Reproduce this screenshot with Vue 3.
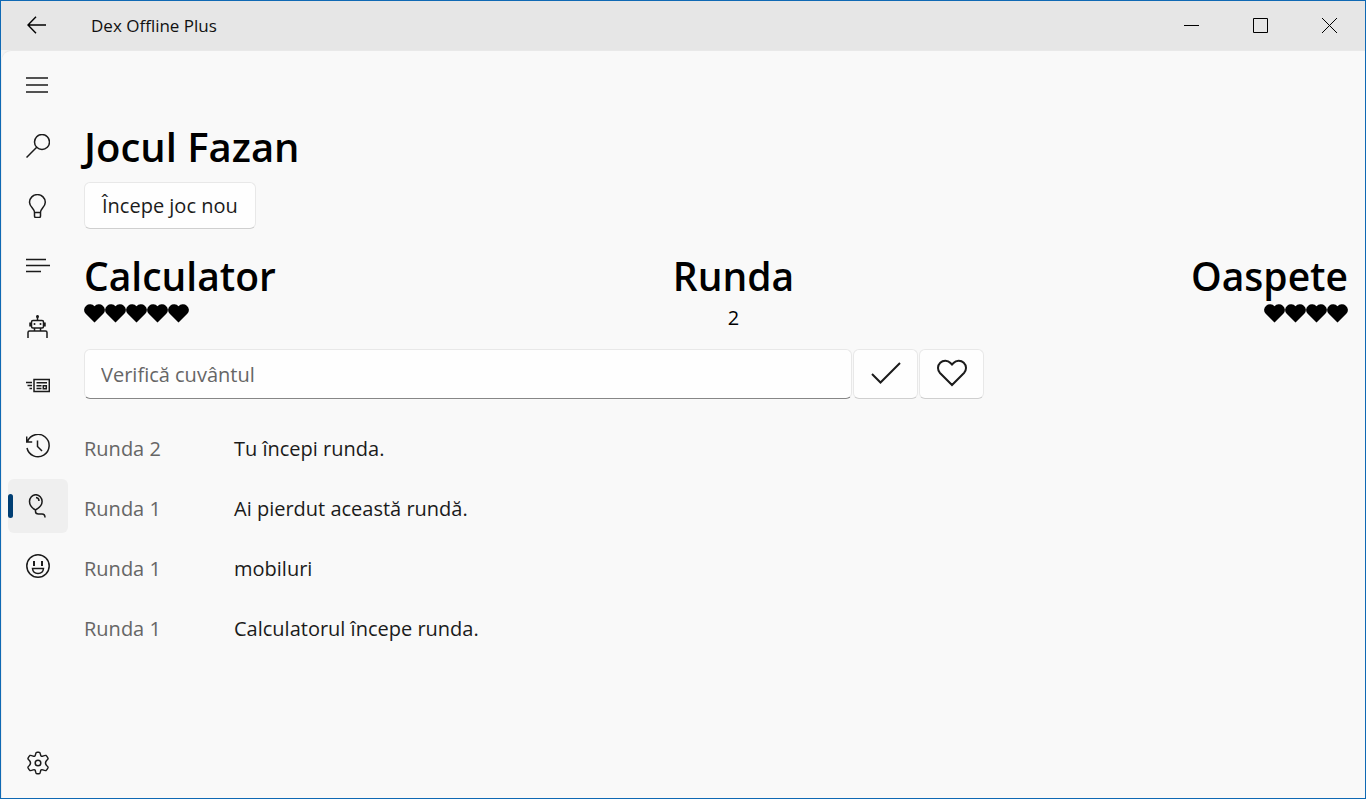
<script setup>
import { ref } from 'vue'

const word = ref('')
const selected = ref('fazan')

const items = [
  { id: 'search', label: 'Caută', paths: ['M11.200 12.800.500 23.500'], circles: [[16, 8, 7.500]] },
  { id: 'idea', label: 'Cuvântul zilei', paths: ['M8.500 18.500C8.500 14.500 3.500 13 3.500 8.300a7.900 7.700 0 0 1 15.800 0C19.300 13 14.500 14.500 14.500 18.500zM8.500 18.500V22q0 1.500 1.300 1.500h3.400q1.300 0 1.300-1.500v-3.500'] },
  { id: 'text', label: 'Definiții', paths: ['M0 5.500h20M0 11.500h24M0 17.500h15'] },
  { id: 'robot', label: 'Robot', paths: ['M11.500 6.500V1.500M7 6.500h9q1.500 0 1.500 1.500v4.500q0 1.500-1.500 1.500H7q-1.500 0-1.500-1.500V8q0-1.500 1.500-1.500zM4 8.500v4M19 8.500v4M8.500 14v2.500M14.500 14v2.500M2 24v-5.500q0-1.500 1.500-1.500h16q1.500 0 1.500 1.500V24'], dots: [[11.5, 2.5, 1.5], [8.5, 10, 1], [14.5, 10, 1]] },
  { id: 'news', label: 'Noutăți', paths: ['M8 5.500h15.300v12H8zM0 8.500h6M1.500 11.500H6M3.500 14.500H6M10.500 8.700h10.500M10.500 11.700h5M10.500 14.500h5M17.300 11.700h3v3h-3z'] },
  { id: 'history', label: 'Istoric', paths: ['M1.500 7.500A11.200 11.200 0 1 1 1 14M0.700 2.500v5.500h5.500M11.500 6.500v6l4.500 4.500'] },
  { id: 'fazan', label: 'Jocul Fazan', paths: ['M9.500 16C6 14 3.500 11 3.500 7.500a6.300 6.800 0 0 1 12.600 0C16.100 11 13 14 9.500 16zM10 3.500q3 .3 3 3.500M9.500 16v1.500q0 2.500 3 2.500h3.500q3 0 3 3.500'] },
  { id: 'jokes', label: 'Glume', paths: ['M6.500 14.500h11q-.5 5-5.500 5t-5.500-5z'], eyes: 'M8 7v5M16 7v5', circles: [[12, 12, 11.2]] }
]

const rounds = [
  { round: 'Runda 2', text: 'Tu începi runda.' },
  { round: 'Runda 1', text: 'Ai pierdut această rundă.' },
  { round: 'Runda 1', text: 'mobiluri' },
  { round: 'Runda 1', text: 'Calculatorul începe runda.' }
]
</script>

<template>
  <div class="window">
    <header class="titlebar">
      <button class="back" type="button" aria-label="Înapoi">
        <svg width="20" height="18" viewBox="0 0 20 18"><path d="M9 .8 1 9l8 8.200M1 9h18" /></svg>
      </button>
      <span class="app-name">Dex Offline Plus</span>
      <button class="caption" type="button" aria-label="Minimizează">
        <svg width="15" height="15" viewBox="0 0 15 15"><path d="M0 7.500h15" /></svg>
      </button>
      <button class="caption" type="button" aria-label="Maximizează">
        <svg width="15" height="15" viewBox="0 0 15 15"><path d="M.5.5h14v14H.5z" /></svg>
      </button>
      <button class="caption" type="button" aria-label="Închide">
        <svg width="15" height="15" viewBox="0 0 15 15"><path d="m0 0 15 15M15 0 0 15" /></svg>
      </button>
    </header>

    <div class="body">
      <nav class="rail">
        <button class="rail-item menu" type="button" aria-label="Meniu">
          <svg width="24" height="24" viewBox="0 0 24 24"><path d="M0 5h22M0 12h22M0 19h22" /></svg>
        </button>
        <button
          v-for="item in items"
          :key="item.id"
          class="rail-item"
          :class="{ active: item.id === selected }"
          type="button"
          :aria-label="item.label"
          @click="selected = item.id"
        >
          <svg width="24" height="24" viewBox="0 0 24 24">
            <path v-for="d in item.paths" :key="d" :d="d" />
            <path v-if="item.eyes" class="eyes" :d="item.eyes" />
            <circle v-for="c in item.circles" :key="c.join()" :cx="c[0]" :cy="c[1]" :r="c[2]" />
            <circle v-for="c in item.dots" :key="c.join()" class="dot" :cx="c[0]" :cy="c[1]" :r="c[2]" />
          </svg>
        </button>
        <button class="rail-item settings" type="button" aria-label="Setări">
          <svg width="24" height="24" viewBox="0 0 24 24">
            <path stroke-linejoin="round" d="M9.500 3.500q.3-2.200 1.500-2.200h2q1.200 0 1.500 2.200.2 2.300 2.400 1.600 2.300-1 3.200-.6 1 .8 1.900 2.800.3.800-1.400 2.200-2.200 2.500 0 5 1.700 1.400 1.400 2.200-.9 2-1.900 2.800-.9.400-3.200-.6-2.200-.7-2.400 1.600-.3 2.200-1.500 2.200h-2q-1.200 0-1.500-2.200-.2-2.300-2.400-1.600-2.300 1-3.200.6-1-.8-1.900-2.800-.3-.8 1.400-2.200 2.200-2.500 0-5Q1.700 8.100 2 7.300q.9-2 1.900-2.800.9-.4 3.200.6 2.200.7 2.400-1.600z" />
            <circle cx="12" cy="12" r="2.800" />
          </svg>
        </button>
      </nav>

      <main class="content">
        <h1>Jocul Fazan</h1>
        <button class="box new-game" type="button">Începe joc nou</button>

        <section class="score">
          <div class="player">
            <h2>Calculator</h2>
            <div class="lives">
              <svg v-for="n in 5" :key="n" width="21" height="19" viewBox="0 0 21 19"><path d="M10.500 18.500 1.500 9.500A5.600 5.300 0 0 1 10.500 2.300 5.600 5.300 0 0 1 19.500 9.500z" /></svg>
            </div>
          </div>
          <div class="player round">
            <h2>Runda</h2>
            <p>2</p>
          </div>
          <div class="player guest">
            <h2>Oaspete</h2>
            <div class="lives">
              <svg v-for="n in 4" :key="n" width="21" height="19" viewBox="0 0 21 19"><path d="M10.500 18.500 1.500 9.500A5.600 5.300 0 0 1 10.500 2.300 5.600 5.300 0 0 1 19.500 9.500z" /></svg>
            </div>
          </div>
        </section>

        <form class="entry" @submit.prevent>
          <input v-model="word" class="box" type="text" placeholder="Verifică cuvântul" aria-label="Verifică cuvântul" />
          <button class="box" type="submit" aria-label="Verifică">
            <svg width="30" height="30" viewBox="0 0 30 30"><path d="m1 15 8.500 8.500L29 4" /></svg>
          </button>
          <button class="box" type="button" aria-label="Folosește o viață">
            <svg width="30" height="30" viewBox="0 0 30 30"><path d="M15 26 3 14A7.200 7.200 0 0 1 13.500 4L15 5.500 16.500 4A7.200 7.200 0 0 1 27 14z" /></svg>
          </button>
        </form>

        <dl class="log">
          <div v-for="(entry, i) in rounds" :key="i" class="log-row">
            <dt>{{ entry.round }}</dt>
            <dd>{{ entry.text }}</dd>
          </div>
        </dl>
      </main>
    </div>
  </div>
</template>

<style>
body {
  margin: 0;
  background: #f9f9f9;
}
</style>

<style scoped>
* {
  box-sizing: border-box;
}

.window {
  display: flex;
  flex-direction: column;
  min-height: 100vh;
  border: 1px solid #0f69b4;
  background: #f3f3f3;
  color: #1b1b1b;
  font: 20px/28px "Segoe UI", "Open Sans", "Noto Sans", sans-serif;
}

button {
  display: flex;
  align-items: center;
  justify-content: center;
  padding: 0;
  border: 0;
  background: none;
  color: inherit;
  font: inherit;
}

svg {
  display: block;
  fill: none;
  stroke: #1b1b1b;
  stroke-width: 1.5;
}

.titlebar {
  display: flex;
  height: 49px;
  padding-right: 1px;
  background: #e6e6e6;
}

.titlebar svg {
  stroke: #000;
  stroke-width: 1;
}

.back {
  width: 72px;
  height: 48px;
}

.titlebar .back svg {
  stroke-width: 1.4;
}

.app-name {
  flex: 1;
  padding-left: 18px;
  color: #111;
  font-size: 17px;
  line-height: 50px;
}

.caption {
  width: 69px;
}

.body {
  display: flex;
  flex: 1;
  border-top: 1px solid #e9e9e9;
  border-left: 1px solid #ececec;
  border-radius: 10px 0 0 0;
  background: #f9f9f9;
}

.rail {
  display: flex;
  flex-direction: column;
  gap: 6px;
  width: 66px;
  padding: 7px 0 8px 6px;
}

.rail-item {
  position: relative;
  width: 60px;
  height: 54px;
  border-radius: 6px;
}

.menu {
  margin-bottom: 1px;
}

.menu svg {
  stroke-width: 1.4;
}

.dot {
  fill: #1b1b1b;
  stroke: none;
}

.eyes {
  stroke-width: 2;
}

.active {
  background: #efefef;
}

.active::before {
  position: absolute;
  left: 0;
  width: 5px;
  height: 24px;
  border-radius: 3px;
  background: #003e73;
  content: "";
}

.settings {
  margin-top: auto;
}

.content {
  flex: 1;
  padding: 68px 17px 0 16px;
}

h1,
h2 {
  margin: 0;
  color: #000;
  font-size: 40px;
  font-weight: 600;
  line-height: 56px;
}

h2 {
  font-size: 39px;
}

.box {
  border: 1px solid #e8e8e8;
  border-bottom-color: #cfcfcf;
  border-radius: 6px;
  background: #fefefe;
}

.new-game {
  height: 47px;
  margin-top: 7px;
  padding: 1px 17px 0;
}

.score {
  display: flex;
  justify-content: space-between;
  margin-top: 19px;
}

.round {
  text-align: center;
}

.round p {
  margin: 0;
  color: #000;
}

.guest {
  text-align: right;
}

.lives {
  display: flex;
}

.guest .lives {
  justify-content: flex-end;
}

.lives svg {
  fill: #000;
  stroke: none;
}

.entry {
  display: flex;
  gap: 1px;
  max-width: 900px;
  height: 50px;
  margin-top: 17px;
}

.entry input {
  flex: 1;
  min-width: 0;
  padding: 1px 16px 0;
  border-bottom-color: #868686;
  color: #1b1b1b;
  font: inherit;
}

.entry input::placeholder {
  color: #666;
  opacity: 1;
}

.entry button {
  width: 65px;
}

.entry svg {
  stroke-width: 2;
}

.log {
  margin: 20px 0 0;
}

.log-row {
  display: grid;
  grid-template-columns: 150px 1fr;
  align-items: center;
  height: 60px;
}

dt {
  color: #666;
}

dd {
  margin: 0;
}
</style>
